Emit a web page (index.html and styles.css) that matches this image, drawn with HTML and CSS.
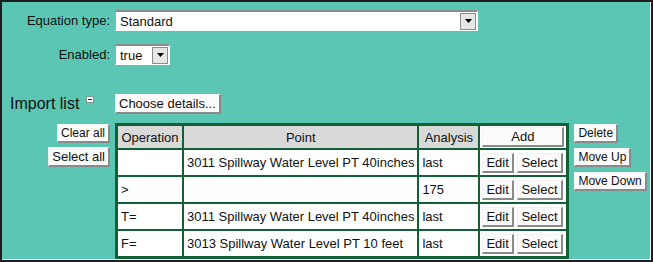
FILE: index.html
```html
<!DOCTYPE html>
<html lang="en">
<head>
  <meta charset="UTF-8" />
  <title>Equation</title>
  <link rel="stylesheet" href="styles.css">
</head>
<body>

<div class="frame">
  <div class="field">
    <label class="field-label">Equation type:</label>
    <div class="combo combo-wide">
      <span class="combo-value">Standard</span>
      <span class="combo-btn"><svg width="7" height="4" viewBox="0 0 7 4"><path d="M0 0h7L3.5 4z" fill="#000"/></svg></span>
    </div>
  </div>

  <div class="field field-enabled">
    <label class="field-label">Enabled:</label>
    <div class="combo combo-narrow">
      <span class="combo-value">true</span>
      <span class="combo-btn"><svg width="7" height="4" viewBox="0 0 7 4"><path d="M0 0h7L3.5 4z" fill="#000"/></svg></span>
    </div>
  </div>

  <div class="field field-import">
    <div class="import-title">Import list
      <svg class="collapse" width="8" height="7" viewBox="0 0 8 7"><rect x="0.5" y="0.5" width="7" height="6" fill="#fff" stroke="#7a9a96"/><path d="M2 3.5h4" stroke="#123" stroke-width="1"/></svg>
    </div>
    <button class="btn">Choose details...</button>
  </div>

  <div class="import-body">
    <div class="side side-left">
      <button class="btn btn-small">Clear all</button>
      <button class="btn">Select all</button>
    </div>

    <table class="import-table">
      <tr>
        <th class="col-op">Operation</th>
        <th class="col-point">Point</th>
        <th class="col-analysis">Analysis</th>
        <th class="col-actions"><button class="btn btn-add">Add</button></th>
      </tr>
      <tr>
        <td></td>
        <td>3011 Spillway Water Level PT 40inches</td>
        <td>last</td>
        <td class="actions"><button class="btn">Edit</button> <button class="btn">Select</button></td>
      </tr>
      <tr>
        <td>&gt;</td>
        <td></td>
        <td>175</td>
        <td class="actions"><button class="btn">Edit</button> <button class="btn">Select</button></td>
      </tr>
      <tr>
        <td>T=</td>
        <td>3011 Spillway Water Level PT 40inches</td>
        <td>last</td>
        <td class="actions"><button class="btn">Edit</button> <button class="btn">Select</button></td>
      </tr>
      <tr>
        <td>F=</td>
        <td>3013 Spillway Water Level PT 10 feet</td>
        <td>last</td>
        <td class="actions"><button class="btn">Edit</button> <button class="btn">Select</button></td>
      </tr>
    </table>

    <div class="side side-right">
      <button class="btn btn-small">Delete</button>
      <button class="btn btn-small">Move Up</button>
      <button class="btn btn-small">Move Down</button>
    </div>
  </div>
</div>

</body>
</html>
```

FILE: styles.css
```css
:root {
  --teal: #5cc6b4;
  --green: #0f6236;
  --ink: #111;
  --head-bg: #d9d9d9;
}
body {
  margin: 0;
  font-family: 'Liberation Sans', Arial, sans-serif;
  font-size: 13px;
  color: var(--ink);
}
.frame {
  box-sizing: border-box;
  width: 653px;
  height: 262px;
  background: var(--teal);
  border: 2px solid #1e1e1e;
  box-shadow: inset -1px -1px 0 #fff;
  padding-top: 8px;
  overflow: hidden;
}
.field {
  display: flex;
  align-items: center;
}
.field-label {
  width: 108px;
  padding-right: 5px;
  text-align: right;
}
.field-enabled {
  margin-top: 13px;
}
.field-import {
  margin-top: 29px;
}
.import-title {
  width: 105px;
  padding-left: 8px;
  font-size: 16px;
  line-height: 18px;
}
.collapse {
  vertical-align: 6px;
  margin-left: 2px;
}

/* fake select boxes */
.combo {
  box-sizing: border-box;
  display: flex;
  align-items: center;
  justify-content: space-between;
  background: #fff;
  border: 1px solid;
  border-color: #8a8a8a #fff #fff #a8a8a8;
  border-top-width: 2px;
  padding: 0 1px 0 4px;
}
.combo-wide {
  width: 363px;
  height: 21px;
}
.combo-narrow {
  width: 55px;
  height: 21px;
}
.combo-btn {
  box-sizing: border-box;
  width: 16px;
  height: 17px;
  display: flex;
  align-items: center;
  justify-content: center;
  background: #e6e6e6;
  border: 1px solid #8c8c8c;
}

/* buttons */
.btn {
  font-family: inherit;
  font-size: 13px;
  line-height: 15px;
  color: var(--ink);
  background: #fbfbfb;
  border: 1px solid #f2f2f2;
  border-right: 2px solid #8a8a8a;
  border-bottom: 2px solid #8a8a8a;
  border-radius: 0;
  padding: 1px 3px;
  margin: 0;
  white-space: nowrap;
  cursor: pointer;
}
.btn-small {
  font-size: 12px;
  line-height: 14px;
}
.btn-add {
  display: block;
  width: 100%;
}

/* list area */
.import-body {
  display: flex;
  align-items: flex-start;
  margin-top: 9px;
}
.side {
  display: flex;
  flex-direction: column;
  gap: 4px;
  padding-top: 1px;
  flex-shrink: 0;
}
.side-left {
  width: 108px;
  margin-right: 5px;
  align-items: flex-end;
}
.side-right {
  gap: 5px;
  margin-left: 5px;
  align-items: flex-start;
}
.import-table {
  flex-shrink: 0;
  border: 1px solid var(--green);
  border-spacing: 2px;
  background: var(--green);
}
.import-table th,
.import-table td {
  padding: 0 3px;
  background: #fff;
  white-space: nowrap;
  text-align: left;
  height: 25px;
}
.import-table th {
  font-weight: normal;
  text-align: center;
  background: var(--head-bg);
  height: 22px;
}
.import-table th.col-actions {
  background: #fff;
  padding: 0 2px;
}
.col-op { width: 58px; }
.col-point { width: 226px; }
.col-analysis { width: 53px; }
.col-actions { width: 82px; }
.import-table td.actions {
  padding: 0 2px;
}
```
